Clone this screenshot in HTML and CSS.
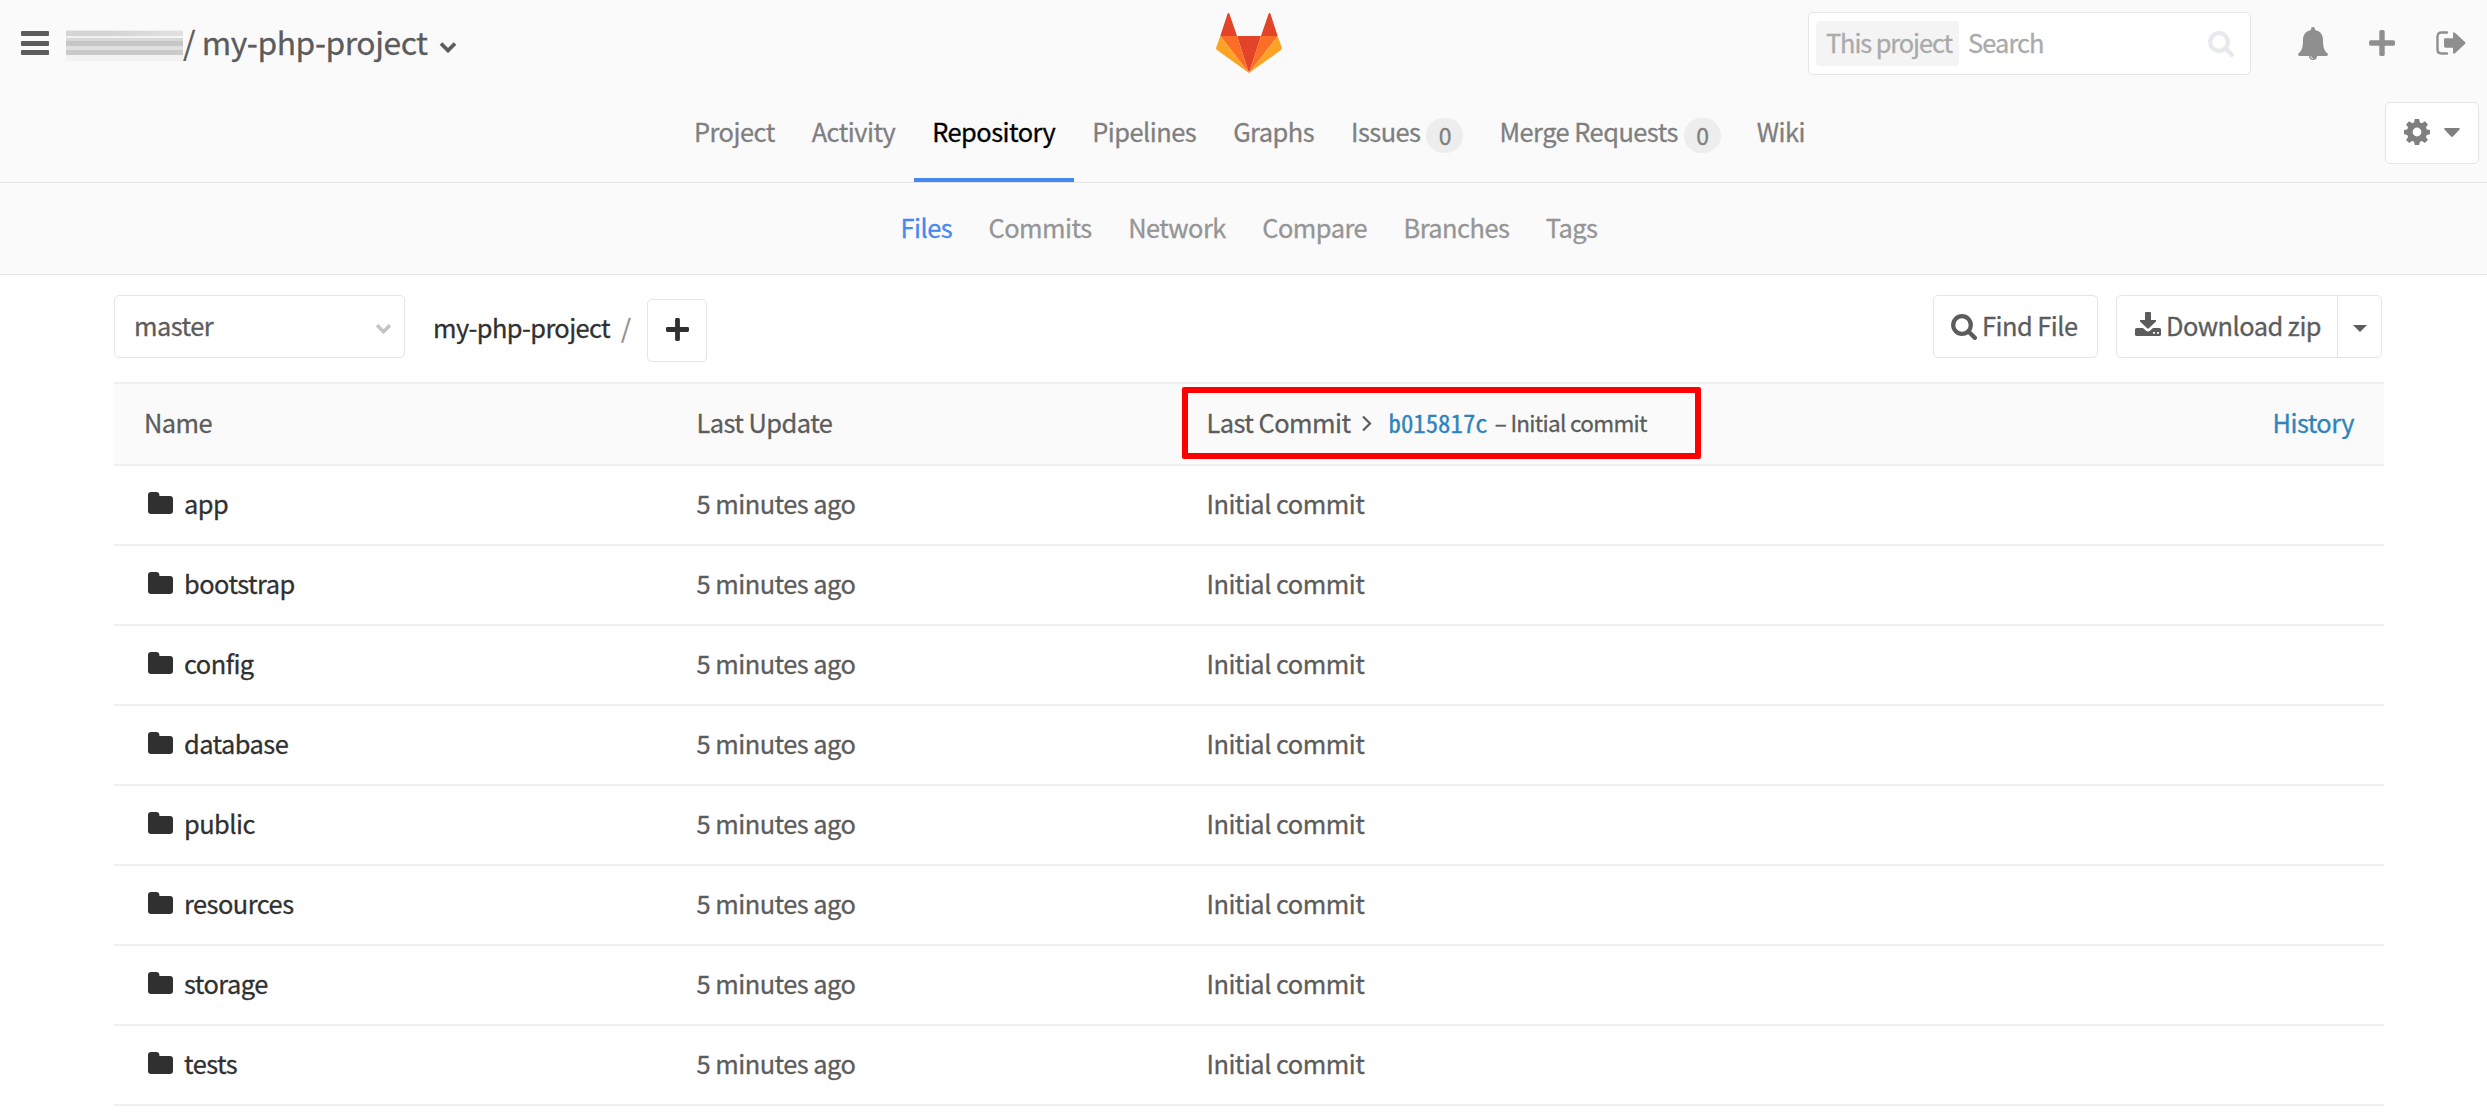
FILE: index.html
```
<!DOCTYPE html>
<html lang="en">
<head>
<meta charset="utf-8">
<title>my-php-project</title>
<link rel="stylesheet" href="styles.css">
</head>
<body>
<svg class="defs" width="0" height="0">
  <symbol id="plus" viewBox="0 0 24 24"><path d="M9.500 1.500q0-1.500 1.500-1.500h2q1.500 0 1.500 1.500v8h8q1.500 0 1.500 1.500v2q0 1.500-1.500 1.500h-8v8q0 1.500-1.500 1.500h-2q-1.500 0-1.500-1.500v-8h-8q-1.500 0-1.500-1.500v-2q0-1.500 1.500-1.500h8z"/></symbol>
  <symbol id="search" viewBox="0 0 26 26"><circle cx="11" cy="11" r="8.800" fill="none" stroke="currentColor" stroke-width="4.200"/><path d="M17.500 17.500l6.300 6.300" stroke="currentColor" stroke-width="4.400" stroke-linecap="round"/></symbol>
  <symbol id="folder" viewBox="0 0 25 22"><path d="M0 3.200Q0 0 3.200 0h5Q11.400 0 11.400 3.200V4H21.800Q25 4 25 7.200V18.800Q25 22 21.800 22H3.200Q0 22 0 18.800z"/></symbol>
  <symbol id="chevron" viewBox="0 0 18 12"><path d="M2 2.500l7 7 7-7" fill="none" stroke="currentColor" stroke-width="3.800"/></symbol>
</svg>
<header class="header">
  <div class="topbar">
    <div class="menu"><i></i><i></i><i></i></div>
    <span class="redacted"></span>
    <h1 class="title">/ my-php-project</h1>
    <svg class="title-caret" width="18" height="12"><use href="#chevron"/></svg>
    <svg class="logo" width="66" height="60" viewBox="0 0 66 60">
      <path fill="#e24329" d="M4.300 23L11.500 1Q12.400-.8 13.500 1L21 23zM45 23L52.500 1Q53.600-.8 54.500 1L61.700 23zM21 23h24L33 60z"/>
      <path fill="#fc6d26" d="M4.300 23H21l12 37zM61.700 23H45L33 60z"/>
      <path fill="#fca326" d="M4.300 23L.2 34.500Q-.2 36 1 37L33 60zM61.700 23l4.100 11.500Q66.200 36 65 37L33 60z"/>
    </svg>
    <div class="search">
      <span class="scope">This project</span>
      <span class="placeholder">Search</span>
      <svg width="26" height="26"><use href="#search"/></svg>
    </div>
    <svg class="bell" width="30" height="34" viewBox="0 0 30 34"><path d="M15 0q2 0 2 2v1c5 .8 8 4.500 8 10 0 8 1.500 11 5 14 0 1.500-1 2-2 2H19a4 4 0 0 1-8 0H2c-1 0-2-.5-2-2 3.500-3 5-6 5-14 0-5.500 3-9.200 8-10V2q0-2 2-2z"/><path d="M12.700 29.200q.3 2.300 2.400 2.500" fill="none" stroke="#fafafa" stroke-width=".8"/></svg>
    <svg class="new" width="26" height="26"><use href="#plus"/></svg>
    <svg class="signout" width="30" height="24" viewBox="0 0 30 24"><path d="M11 1.500H5.500q-4 0-4 4v13q0 4 4 4H11" fill="none" stroke="currentColor" stroke-width="2.400" stroke-linecap="round"/><path d="M8 8.500q0-1.200 1.200-1.200H17V2.500q.2-2 2-.8l10 9.200q1 1.100 0 2.200l-10 9.200q-1.800 1.200-2-.8v-4.800H9.200Q8 16.300 8 15.100z"/></svg>
  </div>
  <nav class="nav">
    <a>Project</a><a>Activity</a><a class="active">Repository</a><a>Pipelines</a><a>Graphs</a><a>Issues<b class="badge">0</b></a><a>Merge Requests<b class="badge">0</b></a><a>Wiki</a>
    <button class="settings">
      <svg width="26" height="26" viewBox="0 0 26 26"><path fill-rule="evenodd" d="M10.800 0h4.400l.7 3.400 2 .9 3-2 3.100 3.100-2 2.900.8 2.100 3.200.6v4.200l-3.200.7-.9 2.100 2 2.900-3 3-2.900-1.900-2.100.8-.7 3.200h-4.400l-.7-3.200-2.100-.8-2.900 1.900-3-3 2-2.900-.9-2.100-3.200-.7V11l3.200-.6.8-2.100-2-2.900 3.100-3.100 3 2 2-.9zM13 8.600a4.400 4.400 0 1 0 0 8.800 4.400 4.400 0 0 0 0-8.800z"/></svg>
      <svg width="16" height="9" viewBox="0 0 16 9"><path d="M1 0h14q1.400.2.500 1.500L9 8.500q-1 .8-2 0L.5 1.500Q-.4.200 1 0z"/></svg>
    </button>
  </nav>
  <nav class="subnav">
    <a class="active">Files</a><a>Commits</a><a>Network</a><a>Compare</a><a>Branches</a><a>Tags</a>
  </nav>
</header>
<main class="content">
  <div class="toolbar">
    <div class="box select"><span>master</span><svg width="17" height="11"><use href="#chevron"/></svg></div>
    <div class="crumb">my-php-project</div><span class="slash">/</span>
    <button class="box add"><svg width="23" height="23"><use href="#plus"/></svg></button>
    <button class="box find"><svg width="26" height="26"><use href="#search"/></svg><span>Find File</span></button>
    <div class="box download">
      <svg width="26" height="24" viewBox="0 0 26 24"><path fill-rule="evenodd" d="M10 1q0-1 1-1h4q1 0 1 1v7h4.500q1.300.2.500 1.400l-7.200 6.900q-.8.700-1.600 0L5 9.400Q4.200 8.200 5.500 8H10zM1.500 16H8l3 2.700q2 1.600 4 0L18 16h6.500q1.500 0 1.500 1.500v5q0 1.500-1.500 1.500h-23Q0 24 0 22.500v-5Q0 16 1.500 16zM18 20v1.800h1.900V20zm4 0v1.800h1.900V20z"/></svg>
      <span class="dl-text">Download zip</span>
      <span class="dl-more"><svg width="14" height="7" viewBox="0 0 14 7"><path d="M0 0h14L7 7z"/></svg></span>
    </div>
  </div>
  <div class="table">
    <div class="row head">
      <span>Name</span><span>Last Update</span>
      <span class="commit"><span class="commit-label">Last Commit</span><svg width="10" height="17" viewBox="0 0 10 17"><path d="M1 1.500l7 7-7 7" fill="none" stroke="currentColor" stroke-width="2.200"/></svg><code>b015817c</code><small>– Initial commit</small></span>
      <a class="history">History</a>
      <div class="highlight"></div>
    </div>
    <div class="row"><a class="name"><svg width="25" height="22"><use href="#folder"/></svg>app</a><span>5 minutes ago</span><span>Initial commit</span></div>
    <div class="row"><a class="name"><svg width="25" height="22"><use href="#folder"/></svg>bootstrap</a><span>5 minutes ago</span><span>Initial commit</span></div>
    <div class="row"><a class="name"><svg width="25" height="22"><use href="#folder"/></svg>config</a><span>5 minutes ago</span><span>Initial commit</span></div>
    <div class="row"><a class="name"><svg width="25" height="22"><use href="#folder"/></svg>database</a><span>5 minutes ago</span><span>Initial commit</span></div>
    <div class="row"><a class="name"><svg width="25" height="22"><use href="#folder"/></svg>public</a><span>5 minutes ago</span><span>Initial commit</span></div>
    <div class="row"><a class="name"><svg width="25" height="22"><use href="#folder"/></svg>resources</a><span>5 minutes ago</span><span>Initial commit</span></div>
    <div class="row"><a class="name"><svg width="25" height="22"><use href="#folder"/></svg>storage</a><span>5 minutes ago</span><span>Initial commit</span></div>
    <div class="row"><a class="name"><svg width="25" height="22"><use href="#folder"/></svg>tests</a><span>5 minutes ago</span><span>Initial commit</span></div>
  </div>
</main>
</body>
</html>
```
FILE: styles.css
```
* { box-sizing: border-box; }
body {
  margin: 0;
  height: 1119px;
  overflow: hidden;
  background: #fff;
  color: #5c5c5c;
  font: 25.400px/40px "Noto Sans CJK SC", "Noto Sans", sans-serif;
  letter-spacing: -.52px;
  -webkit-text-stroke: .3px currentColor;
  white-space: nowrap;
}
.defs { position: absolute; }
svg { display: block; flex: none; fill: currentColor; }
button { font: inherit; color: inherit; letter-spacing: inherit; margin: 0; }

.header { background: #fafafa; }
.topbar { display: flex; align-items: flex-start; height: 88px; }
.menu { display: flex; flex-direction: column; gap: 4.500px; margin: 31px 17px 0 21px; }
.menu i { width: 28px; height: 5px; border-radius: 1px; background: #5c5c5c; }
.redacted {
  width: 117px;
  height: 31px;
  margin-top: 30px;
  background:
    linear-gradient(90deg, transparent 40%, rgba(255,255,255,.3)) 0 0 / 100% 8px no-repeat,
    linear-gradient(#ececec 0 1px, #d5d5d5 1px 6px, #f1f1f1 6px 8px, #d9d9d9 8px 11px, #c6c6c6 11px 16px, #e0e0e0 16px 20px, #c9c9c9 20px 25px, #f3f3f3 25px);
}
.title { margin: 21px 0 0; width: 244px; font-size: 31.800px; font-weight: 400; line-height: 40px; letter-spacing: -.45px; }
.title-caret { margin: 41px 0 0 12px; }
.logo { margin: 13px 0 0 759px; }
.search {
  display: flex;
  align-items: center;
  width: 443px;
  height: 63px;
  margin: 12px 0 0 526px;
  padding: 0 16px 0 7px;
  border: 1px solid #e5e5e5;
  border-radius: 5px;
  background: #fff;
  color: #aaa;
}
.scope { width: 143px; height: 45px; padding: 0 0 0 10px; border-radius: 4px; background: #f4f4f4; line-height: 42px; letter-spacing: -1.100px; }
.placeholder { margin: -3px auto 0 9px; letter-spacing: -.9px; }
.search svg { color: #e7e9ed; }
.bell { margin: 27px 0 0 47px; color: #8f8f8f; }
.new { margin: 30px 0 0 41px; color: #8f8f8f; }
.signout { margin: 31px 0 0 41px; color: #8f8f8f; }

.nav { display: flex; height: 95px; padding-left: 675.500px; border-bottom: 1px solid #e5e5e5; color: #7f7f7f; }
.nav a { display: flex; height: 94px; padding: 23px 18.500px 0; }
.nav .active { color: #000; border-bottom: 4px solid #4688f1; }
.badge {
  width: 37px;
  height: 35px;
  margin: 7px 0 0 6px;
  border-radius: 18px;
  background: #ededed;
  font-size: 23px;
  font-weight: 400;
  line-height: 35px;
  text-align: center;
}
.nav a:nth-child(n+6) { padding-right: 17.500px; }
.settings {
  display: flex;
  align-items: center;
  justify-content: space-between;
  width: 94px;
  height: 62px;
  margin: 14px 8px 0 auto;
  padding: 0 18px 2px 18px;
  border: 1px solid #e5e5e5;
  border-radius: 5px;
  background: #fff;
}
.subnav { display: flex; gap: 36.500px; height: 92px; padding: 24px 0 0 900.500px; border-bottom: 1px solid #e5e5e5; color: #959595; }
.subnav .active { color: #4688f1; }

.content { padding: 0 103px 0 114px; }
.toolbar { display: flex; height: 107px; padding-top: 20px; }
.box { display: flex; align-items: center; height: 63px; border: 1px solid #e5e5e5; border-radius: 5px; background: #fff; }
.box span { margin-top: -3px; }
.select { width: 291px; padding: 0 12px 0 19px; justify-content: space-between; }
.select svg { color: #c4c4c4; margin-top: 4px; }
.crumb { width: 179px; margin: 12px 9px 0 28px; color: #303030; letter-spacing: -.6px; }
.slash { width: 26px; margin-top: 12px; color: #8f8f8f; }
.add { width: 60px; margin-top: 4px; padding: 0 0 3px; justify-content: center; color: #303030; }
.find { width: 165px; margin-left: auto; padding: 0 0 0 17px; gap: 5px; }
.download { width: 266px; margin: 0 2px 0 18px; padding-left: 18px; }
.download > svg { margin-top: -5px; }
.dl-text { margin-left: 5px; }
.download .dl-more { display: flex; align-items: center; height: 61px; margin: 0 0 0 auto; padding: 4px 14px 0 15px; border-left: 1px solid #e5e5e5; }

.table { border-top: 2px solid #efefef; }
.row { display: grid; grid-template-columns: 552.500px 510px 1fr auto; align-items: center; height: 80px; padding: 0 30px 4px; border-bottom: 2px solid #efefef; }
.head { position: relative; height: 82px; padding-bottom: 5px; background: #fafafa; }
.name { display: flex; align-items: center; gap: 11px; padding-left: 4px; color: #303030; }
.commit { display: flex; align-items: center; }
.commit-label { width: 144px; }
.commit svg { margin: 3px 17px 0 11px; }
.commit code { font: 24.800px/40px "Noto Sans Mono CJK SC", "Liberation Mono", monospace; letter-spacing: 0; color: #3084bb; }
.commit small { margin-left: 7px; font-size: 22.500px; letter-spacing: -.7px; }
.history { color: #3084bb; }
.highlight { position: absolute; left: 1068px; top: 3px; width: 519px; height: 72px; border: 6px solid #f00; border-radius: 2px; }
```
